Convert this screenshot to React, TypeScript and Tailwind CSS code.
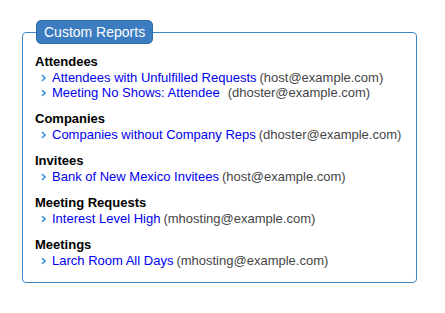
import React from "react";

type Item = { name: string; email: string; extraGap?: boolean };
type Section = { title: string; items: Item[] };

const sections: Section[] = [
  {
    title: "Attendees",
    items: [
      { name: "Attendees with Unfulfilled Requests", email: "(host@example.com)" },
      { name: "Meeting No Shows: Attendee", email: "(dhoster@example.com)", extraGap: true },
    ],
  },
  {
    title: "Companies",
    items: [{ name: "Companies without Company Reps", email: "(dhoster@example.com)" }],
  },
  {
    title: "Invitees",
    items: [{ name: "Bank of New Mexico Invitees", email: "(host@example.com)" }],
  },
  {
    title: "Meeting Requests",
    items: [{ name: "Interest Level High", email: "(mhosting@example.com)" }],
  },
  {
    title: "Meetings",
    items: [{ name: "Larch Room All Days", email: "(mhosting@example.com)" }],
  },
];

function Chevron() {
  return (
    <svg width="5" height="8" viewBox="0 0 5 8" className="shrink-0">
      <path d="M1 1 L4 4 L1 7" fill="none" stroke="#3f92dc" strokeWidth="1.6" />
    </svg>
  );
}

export default function App() {
  return (
    <div className="w-[445px] h-[313px] bg-white pl-[22px] pt-[20px]" style={{ fontFamily: '"Liberation Sans", Arial, sans-serif' }}>
      <fieldset className="w-[395px] h-[263px] border border-[#3d86c8] rounded-[4px] pl-[12px] pt-[10px]">
        <legend className="ml-[1px] h-[24px] px-[7px] rounded-[5px] bg-[#3b7dc0] border border-[#2d6aa8] text-white text-[14px] leading-[22px]">
          Custom Reports
        </legend>
        <div className="flex flex-col gap-[11px]">
          {sections.map((s) => (
            <div key={s.title} className="flex flex-col">
              <div className="text-[13px] leading-[16px] font-bold text-black">{s.title}</div>
              {s.items.map((it) => (
                <div key={it.name} className="flex items-center h-[15px] pl-[6px] whitespace-nowrap">
                  <Chevron />
                  <span className="ml-[6px] text-[13px] leading-[15px] text-[#0000ee]">{it.name}</span>
                  <span className={(it.extraGap ? "ml-[8px]" : "ml-[3px]") + " text-[13px] leading-[15px] text-[#454545]"}>
                    {it.email}
                  </span>
                </div>
              ))}
            </div>
          ))}
        </div>
      </fieldset>
    </div>
  );
}
